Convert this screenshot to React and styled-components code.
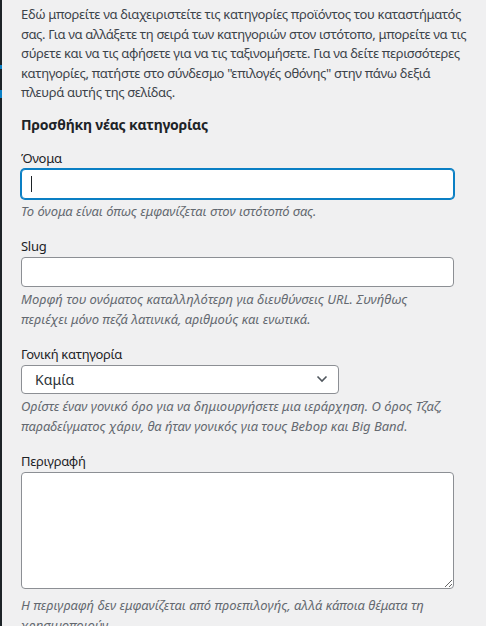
import styled, { createGlobalStyle } from 'styled-components';

const GlobalStyle = createGlobalStyle`
	html, body {
		margin: 0;
		padding: 0;
		background: #f0f0f1;
	}
	body {
		font-family: 'Noto Sans', 'Open Sans', sans-serif;
		font-size: 13px;
		color: #3c434a;
	}
`;

const ChevronDown = () => (
	<svg width='12' height='8' viewBox='0 0 12 8'>
		<path d='M1.5 1.5 L6 6 L10.5 1.5' fill='none' stroke='#50575e' strokeWidth='1.6' />
	</svg>
);

const App = () => {
	return (
		<>
			<GlobalStyle />
			<Page>
				<AdminEdge>
					<EdgeMark $top={65} $height={4} />
					<EdgeMark $top={90} $height={8} />
				</AdminEdge>
				<Content>
					<Intro>
						Εδώ μπορείτε να διαχειριστείτε τις κατηγορίες προϊόντος του καταστήματός
						<br />
						σας. Για να αλλάξετε τη σειρά των κατηγοριών στον ιστότοπο, μπορείτε να τις
						<br />
						σύρετε και να τις αφήσετε για να τις ταξινομήσετε. Για να δείτε περισσότερες
						<br />
						κατηγορίες, πατήστε στο σύνδεσμο "επιλογές οθόνης" στην πάνω δεξιά
						<br />
						πλευρά αυτής της σελίδας.
					</Intro>

					<FormTitle>Προσθήκη νέας κατηγορίας</FormTitle>

					<Field>
						<Label htmlFor='tag-name'>Όνομα</Label>
						<InputWrap>
							<TextInput id='tag-name' type='text' $focused />
							<Caret />
						</InputWrap>
						<Hint>Το όνομα είναι όπως εμφανίζεται στον ιστότοπό σας.</Hint>
					</Field>

					<Field>
						<Label htmlFor='tag-slug'>Slug</Label>
						<TextInput id='tag-slug' type='text' />
						<Hint>
							Μορφή του ονόματος καταλληλότερη για διευθύνσεις URL. Συνήθως
							<br />
							περιέχει μόνο πεζά λατινικά, αριθμούς και ενωτικά.
						</Hint>
					</Field>

					<Field>
						<Label>Γονική κατηγορία</Label>
						<Select>
							<span>Καμία</span>
							<ChevronDown />
						</Select>
						<Hint>
							Ορίστε έναν γονικό όρο για να δημιουργήσετε μια ιεράρχηση. Ο όρος Τζαζ,
							<br />
							παραδείγματος χάριν, θα ήταν γονικός για τους Bebop και Big Band.
						</Hint>
					</Field>

					<Field $gap={15}>
						<Label htmlFor='tag-description'>Περιγραφή</Label>
						<TextArea id='tag-description' />
						<Hint $top={6}>
							Η περιγραφή δεν εμφανίζεται από προεπιλογής, αλλά κάποια θέματα τη
							<br />
							χρησιμοποιούν.
						</Hint>
					</Field>
				</Content>
			</Page>
		</>
	);
};

export default App;

const Page = styled.div`
	display: flex;
	min-height: 626px;
`;

const AdminEdge = styled.div`
	position: relative;
	flex: 0 0 2px;
	background: #1d2327;
`;

const EdgeMark = styled.div`
	position: absolute;
	left: 0;
	top: ${p => p.$top}px;
	width: 2px;
	height: ${p => p.$height}px;
	background: #0a7fc4;
`;

const Content = styled.div`
	width: 456px;
	padding: 5px 0 0 19px;
`;

const Intro = styled.p`
	margin: 0;
	line-height: 19.5px;
	letter-spacing: -0.33px;
	white-space: nowrap;
	color: #3c434a;
`;

const FormTitle = styled.h2`
	margin: 12px 0 13px;
	font-size: 14px;
	line-height: 20px;
	font-weight: 700;
	letter-spacing: -0.2px;
	color: #1d2327;
`;

const Field = styled.div`
	display: flex;
	flex-direction: column;
	align-items: flex-start;
	& + & {
		margin-top: ${p => p.$gap || 13}px;
	}
`;

const Label = styled.label`
	line-height: 20px;
	letter-spacing: -0.3px;
	color: #1d2327;
`;

const InputWrap = styled.div`
	position: relative;
	width: 95%;
	margin-top: 1px;
`;

const TextInput = styled.input`
	display: block;
	box-sizing: border-box;
	width: ${p => (p.$focused ? '100%' : '95%')};
	height: 30px;
	margin: ${p => (p.$focused ? '0' : '1px 0 0')};
	padding: 0 8px;
	background: #fff;
	border: 1px solid ${p => (p.$focused ? '#0a7fc4' : '#8c8f94')};
	box-shadow: ${p => (p.$focused ? '0 0 0 1px #0a7fc4' : 'none')};
	border-radius: 4px;
	font: inherit;
	color: #2c3338;
	outline: none;
`;

const Caret = styled.span`
	position: absolute;
	left: 10px;
	top: 7px;
	width: 1px;
	height: 16px;
	background: #1d2327;
`;

const Hint = styled.p`
	margin: ${p => p.$top || 2}px 0 0;
	line-height: 20px;
	font-style: italic;
	color: #646970;
	white-space: nowrap;
`;

const Select = styled.div`
	box-sizing: border-box;
	display: flex;
	align-items: center;
	justify-content: space-between;
	width: 318px;
	height: 29px;
	margin-top: 1px;
	padding: 0 10px 0 13px;
	background: #fff;
	border: 1px solid #8c8f94;
	border-radius: 4px;
	font-size: 14px;
	color: #2c3338;
`;

const TextArea = styled.textarea`
	display: block;
	box-sizing: border-box;
	width: 95%;
	height: 117px;
	margin: 1px 0 0;
	padding: 2px 6px;
	background: #fff;
	border: 1px solid #8c8f94;
	border-radius: 4px;
	font: inherit;
	color: #2c3338;
	resize: vertical;
	outline: none;
`;
